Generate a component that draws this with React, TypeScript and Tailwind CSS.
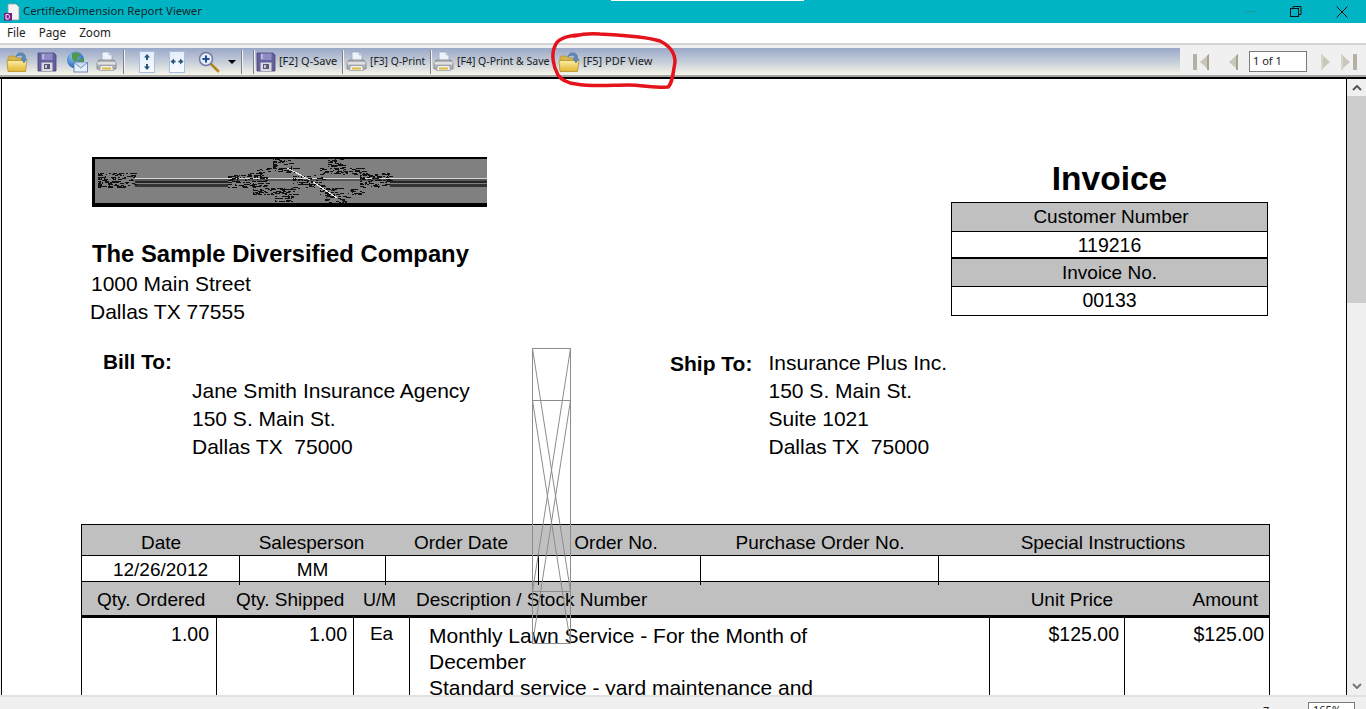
import type { ReactNode } from "react";

// deterministic noise for the broken logo bitmap
function noise(seed: number) {
  let s = seed;
  return () => {
    s = (s * 16807) % 2147483647;
    return s / 2147483647;
  };
}

const LOGO_BLOBS = [
  [6, 16, 43, 31],
  [136, 16, 175, 31],
  [165, 11, 205, 16],
  [181, 1, 201, 11],
  [161, 31, 208, 38],
  [183, 38, 201, 46],
  [201, 18, 231, 31],
  [228, 11, 271, 18],
  [236, 1, 251, 11],
  [228, 31, 271, 38],
  [233, 38, 257, 46],
  [268, 16, 298, 31],
];

function buildLogoDots() {
  const rnd = noise(4711);
  const dots: string[] = [];
  for (const [x0, y0, x1, y1] of LOGO_BLOBS) {
    for (let y = y0; y < y1; y += 1) {
      let x = x0;
      while (x < x1) {
        const w = 1 + Math.floor(rnd() * 5);
        if (rnd() > 0.5) dots.push(`M${x} ${y}h${w}v1h-${w}z`);
        x += w + Math.floor(rnd() * 3);
      }
    }
  }
  return dots.join("");
}

function BrokenLogo() {
  return (
    <svg width="395" height="50" viewBox="0 0 395 50" shapeRendering="crispEdges" className="block">
      <rect width="395" height="50" fill="#000" />
      <rect x="3" y="2" width="392" height="44" fill="#808080" />
      <rect x="43" y="21" width="352" height="1" fill="#d8d8d8" />
      <rect x="43" y="22" width="352" height="2" fill="#555" />
      <rect x="43" y="24" width="93" height="2" fill="#262626" />
      <rect x="43" y="27" width="93" height="3" fill="#333" />
      <rect x="298" y="24" width="97" height="2" fill="#262626" />
      <rect x="298" y="27" width="97" height="3" fill="#333" />
      <path d={buildLogoDots()} fill="#111" />
      <path d="M195 11l23 12M221 25l24 16" stroke="#e8e8e8" strokeWidth="1" fill="none" />
    </svg>
  );
}

function Folder() {
  return (
    <svg width="22" height="22" viewBox="0 0 22 22" className="shrink-0">
      <defs>
        <linearGradient id="folderFace" x1="0" y1="0" x2="0" y2="1">
          <stop offset="0" stopColor="#fff3b0" />
          <stop offset="1" stopColor="#e2b52e" />
        </linearGradient>
      </defs>
      <path d="M2 7l1-2h6l1 2h9v4H2z" fill="#d9b64a" stroke="#a98a2c" strokeWidth="0.6" />
      <path d="M1 9.500h15l5-1-1.500 12H2z" fill="url(#folderFace)" stroke="#b08f2e" strokeWidth="0.8" />
      <path d="M10 6c0-3 3-5 6-4 3 .6 4 3 3.500 6l1.500 0-3 4-3.500-4.500 2 .2c.3-1.500-.5-3-2-3.200-1.800-.3-3.500.3-4.500 1.500z" fill="#5b88b8" stroke="#3c6491" strokeWidth="0.3" />
    </svg>
  );
}

function Floppy() {
  return (
    <svg width="20" height="20" viewBox="0 0 20 20" className="shrink-0">
      <path d="M1 1h16l2 2v16H1z" fill="#64609c" stroke="#45417a" strokeWidth="0.8" />
      <rect x="4.500" y="1.500" width="11" height="6.500" fill="#8f8cc4" />
      <rect x="5" y="2" width="2" height="5" fill="#b9b7de" />
      <rect x="4.500" y="10.500" width="11" height="8.500" fill="#dcdce0" />
      <rect x="7" y="12" width="6" height="5" fill="#5a5878" />
      <rect x="8" y="13" width="2" height="3" fill="#c8c8d4" />
    </svg>
  );
}

function GlobeMail() {
  return (
    <svg width="22" height="22" viewBox="0 0 22 22" className="shrink-0">
      <defs>
        <radialGradient id="globeFace" cx="0.35" cy="0.3" r="0.8">
          <stop offset="0" stopColor="#8cc0f0" />
          <stop offset="1" stopColor="#1c5cb0" />
        </radialGradient>
      </defs>
      <circle cx="9.500" cy="9" r="8.500" fill="url(#globeFace)" />
      <path d="M6 2.500c2-1.200 5-1.500 7-.5l1 3-3 2 1 3-4 .5-2-3zM13 8l4-.5.500 3-2 2-2-1z" fill="#4f9a4a" />
      <rect x="8" y="11.500" width="13.500" height="9.500" fill="#e9eef8" stroke="#4d76b8" strokeWidth="0.8" />
      <path d="M8 11.500l6.750 5.500 6.750-5.500" fill="#cfdcf2" stroke="#4d76b8" strokeWidth="0.8" />
    </svg>
  );
}

function Printer() {
  return (
    <svg width="21" height="21" viewBox="0 0 21 21" className="shrink-0">
      <path d="M6 1h7l3 3v6H6z" fill="#eef2fa" stroke="#9aa6bc" strokeWidth="0.8" />
      <path d="M13 1v3h3" fill="#c3d2ea" stroke="#9aa6bc" strokeWidth="0.5" />
      <path d="M3 9h15l2 3v6H1v-6z" fill="#b0b2b6" stroke="#7d7f85" strokeWidth="0.8" />
      <rect x="1.500" y="11" width="18" height="2.500" fill="#e0e1e4" />
      <path d="M4.500 14.500h12l1 5H3.500z" fill="#eeeff1" stroke="#85878c" strokeWidth="0.6" />
      <rect x="6" y="16.500" width="9" height="2" fill="#e2b93c" />
    </svg>
  );
}

function FitHeight() {
  return (
    <svg width="16" height="22" viewBox="0 0 16 22" className="shrink-0">
      <defs>
        <linearGradient id="pageFace" x1="0" y1="0" x2="0" y2="1">
          <stop offset="0" stopColor="#e4ecfa" />
          <stop offset="1" stopColor="#fbfcff" />
        </linearGradient>
      </defs>
      <rect x="0.500" y="0.500" width="15" height="21" fill="url(#pageFace)" stroke="#a9bfe2" />
      <path d="M8 3l-3 3.500h2V9h2V6.500h2zM8 19l-3-3.500h2V13h2v2.500h2z" fill="#28557f" />
    </svg>
  );
}

function FitWidth() {
  return (
    <svg width="16" height="22" viewBox="0 0 16 22" className="shrink-0">
      <rect x="0.500" y="0.500" width="15" height="21" fill="url(#pageFace)" stroke="#a9bfe2" />
      <path d="M1.500 10.500l3.500-3v2h1.500v2H5v2zM14.500 10.500l-3.500-3v2H9.500v2H11v2z" fill="#28557f" />
    </svg>
  );
}

function ZoomIcon() {
  return (
    <svg width="22" height="22" viewBox="0 0 22 22" className="shrink-0">
      <path d="M13 13l7 7" stroke="#c49a34" strokeWidth="3" strokeLinecap="round" />
      <path d="M13 13l7 7" stroke="#7f6320" strokeWidth="0.8" />
      <circle cx="8" cy="8" r="6.500" fill="#e6ecf8" stroke="#77779f" strokeWidth="1.500" />
      <path d="M8 4.500v7M4.500 8h7" stroke="#1f4f8f" strokeWidth="2" />
    </svg>
  );
}

function Sep({ className = "" }: { className?: string }) {
  return <div className={`h-[24px] w-[2px] shrink-0 border-l border-r border-l-[#7b7f88] border-r-[#f4f4f4] ${className}`} />;
}

function ToolText({ children, className = "" }: { children: ReactNode; className?: string }) {
  return <span className={`whitespace-nowrap text-[#1c1c1c] font-['Noto_Sans',sans-serif] ${className}`}>{children}</span>;
}

function NavArrow({ dir, bar }: { dir: "l" | "r"; bar?: boolean }) {
  const w = bar ? 16 : 10;
  return (
    <svg width={w} height="16" viewBox={`0 0 ${w} 16`} className="shrink-0">
      {dir === "l" ? (
        <>
          {bar && <rect width="4" height="16" fill="#b5b1a4" />}
          <path d={`M${w} 0v16l-9-8z`} fill="#c9c6ba" />
          <path d={`M${w} 0v16h-2V2z`} fill="#a5a296" />
        </>
      ) : (
        <>
          <path d="M0 0v16l9-8z" fill="#c9c6ba" />
          <path d="M0 0v16h2V2z" fill="#d8d5ca" />
          {bar && <rect x="12" width="4" height="16" fill="#b5b1a4" />}
        </>
      )}
    </svg>
  );
}

function TitleBar() {
  return (
    <div className="relative flex h-[23px] shrink-0 items-center bg-[#00b4c4]">
      <div className="absolute left-[611px] top-0 h-px w-[193px] bg-white" />
      <svg width="18" height="18" viewBox="0 0 18 18" className="ml-[3px]">
        <path d="M5 1h8l3 3v13H5z" fill="#f4f4f4" stroke="#9b9b9b" strokeWidth="0.8" />
        <rect x="1" y="10" width="8" height="7.500" fill="#7c1a85" />
        <path d="M3 11.500h2c2 0 2 4.500 0 4.500H3z" fill="none" stroke="#fff" strokeWidth="1" />
      </svg>
      <span className="ml-[2px] text-[11.3px] text-[#10292c] font-['Noto_Sans',sans-serif]">CertiflexDimension Report Viewer</span>
      <div className="ml-auto flex items-center">
        <div className="mr-[35px] h-px w-[10px] bg-[#2a8f99]" />
        <svg width="12" height="12" viewBox="0 0 12 12" className="mr-[34px]" fill="none" stroke="#111">
          <rect x="0.500" y="2.500" width="8" height="8" />
          <path d="M3 2.500V.500h8v8H8.500" />
        </svg>
        <svg width="12" height="12" viewBox="0 0 12 12" className="mr-[18px]" stroke="#111" strokeWidth="1">
          <path d="M.5.500l11 11M11.500.500l-11 11" />
        </svg>
      </div>
    </div>
  );
}

function MenuBar() {
  return (
    <div className="flex h-[19px] shrink-0 items-center gap-[13px] bg-white pl-[7px] text-[11.700px] text-[#222] font-['Noto_Sans',sans-serif]">
      <span>File</span>
      <span>Page</span>
      <span>Zoom</span>
    </div>
  );
}

function ToolBar() {
  return (
    <div className="flex h-[35px] shrink-0 flex-col bg-[#f0f0f0]">
      <div className="h-[3px] border-b-2 border-[#d4d4d4] bg-white" />
      <div className="mt-[3px] flex h-[27px]">
        <div className="flex w-[1180px] items-center bg-gradient-to-b from-[#9aa8c8] via-[#c4ccd8] to-[#f7f5e8] pl-[6px]">
          <Folder />
          <div className="ml-[9px]"><Floppy /></div>
          <div className="ml-[9px]"><GlobeMail /></div>
          <div className="ml-[8px]"><Printer /></div>
          <Sep className="ml-[6px]" />
          <div className="ml-[14px]"><FitHeight /></div>
          <div className="ml-[14px]"><FitWidth /></div>
          <div className="ml-[13px]"><ZoomIcon /></div>
          <div className="ml-[8px] h-0 w-0 border-x-[4px] border-t-[4px] border-x-transparent border-t-black" />
          <Sep className="ml-[5px]" />
          <Sep className="ml-[10px]" />
          <div className="ml-[1px]"><Floppy /></div>
          <ToolText className="ml-[3px] w-[63px] text-[11px]">[F2] Q-Save</ToolText>
          <Sep />
          <div className="ml-[2px]"><Printer /></div>
          <ToolText className="ml-[3px] w-[60px] text-[10.300px]">[F3] Q-Print</ToolText>
          <Sep />
          <div className="ml-[1px]"><Printer /></div>
          <ToolText className="ml-[3px] w-[101px] text-[10.500px]">[F4] Q-Print &amp; Save</ToolText>
          <Folder />
          <ToolText className="ml-[3px] text-[11px]">[F5] PDF View</ToolText>
        </div>
        <div className="flex flex-1 items-center">
          <div className="ml-[13px]"><NavArrow dir="l" bar /></div>
          <div className="ml-[19px]"><NavArrow dir="l" /></div>
          <div className="ml-[11px] flex h-[21px] w-[58px] items-center border border-[#7a7a7a] bg-white pl-[3px] text-[11px] text-[#222] font-['Noto_Sans',sans-serif]">1 of 1</div>
          <div className="ml-[14px]"><NavArrow dir="r" /></div>
          <div className="ml-[10px]"><NavArrow dir="r" bar /></div>
        </div>
      </div>
      <div className="h-[2px] bg-[#a6a6a6]" />
    </div>
  );
}

function ScrollBar() {
  return (
    <div className="flex w-[20px] shrink-0 flex-col items-center bg-[#f0f0f0] border-l border-black">
      <svg width="10" height="6" viewBox="0 0 10 6" fill="none" stroke="#555" strokeWidth="2" className="mt-[6px] shrink-0">
        <path d="M1 5l4-4 4 4" />
      </svg>
      <div className="mt-[5px] h-[207px] w-full shrink-0 bg-[#cdcdcd]" />
      <svg width="10" height="6" viewBox="0 0 10 6" fill="none" stroke="#777" strokeWidth="2" className="mt-auto mb-[6px] shrink-0">
        <path d="M1 1l4 4 4-4" />
      </svg>
    </div>
  );
}

function GrayCell({ children, className = "" }: { children: ReactNode; className?: string }) {
  return <div className={`flex items-center justify-center bg-[#c0c0c0] ${className}`}>{children}</div>;
}

function InvoiceBox() {
  return (
    <div className="w-[317px] border border-black text-center text-[19px] text-black">
      <GrayCell className="h-[29px] border-b border-black pl-[3px]">Customer Number</GrayCell>
      <div className="flex h-[27px] items-center justify-center border-b-2 border-black pt-[2px] text-[19.500px]">119216</div>
      <GrayCell className="h-[28px] border-b border-black pt-[2px]">Invoice No.</GrayCell>
      <div className="flex h-[28px] items-center justify-center text-[19.500px]">00133</div>
    </div>
  );
}

function LinesTable() {
  return (
    <div className="ml-[79px] mt-[24px] w-[1189px] border-x border-t border-black text-[19px] text-black">
      <div className="grid h-[31px] grid-cols-[158px_146px_153px_162px_238px_1fr] items-center border-b border-black bg-[#c0c0c0] pt-[4px] text-center">
        <span>Date</span>
        <span className="pr-[3px]">Salesperson</span>
        <span className="pr-[3px]">Order Date</span>
        <span className="pr-[8px]">Order No.</span>
        <span>Purchase Order No.</span>
        <span className="pr-[2px]">Special Instructions</span>
      </div>
      <div className="grid h-[26px] grid-cols-[158px_146px_153px_162px_238px_1fr] items-center border-b border-black text-center">
        <span className="flex h-full items-center justify-center border-r border-black">12/26/2012</span>
        <span className="flex h-full items-center justify-center border-r border-black">MM</span>
        <span className="h-full border-r border-black" />
        <span className="h-full border-r border-black" />
        <span className="h-full border-r border-black" />
        <span />
      </div>
      <div className="grid h-[36px] grid-cols-[135px_137px_56px_580px_135px_1fr] items-center border-b-[3px] border-black bg-[#c0c0c0] pt-[4px]">
        <span className="pl-[15px]">Qty. Ordered</span>
        <span className="pl-[19px]">Qty. Shipped</span>
        <span className="pl-[9px] text-[18px]">U/M</span>
        <span className="pl-[6px]">Description / Stock Number</span>
        <span className="pr-[12px] text-right">Unit Price</span>
        <span className="pr-[11px] text-right">Amount</span>
      </div>
      <div className="grid h-[90px] grid-cols-[135px_137px_56px_580px_135px_1fr]">
        <div className="border-r border-black pr-[7px] pt-[2px] text-right text-[19.500px]">1.00</div>
        <div className="border-r border-black pr-[6px] pt-[2px] text-right text-[19.500px]">1.00</div>
        <div className="border-r border-black pt-[2px] text-center">Ea</div>
        <div className="border-r border-black pl-[19px] pt-[5px] text-[21px] leading-[26px]">
          Monthly Lawn Service - For the Month of
          <br />
          December
          <br />
          Standard service - yard maintenance and
        </div>
        <div className="border-r border-black pr-[5px] pt-[2px] text-right text-[19.500px]">$125.00</div>
        <div className="pr-[5px] pt-[2px] text-right text-[19.500px]">$125.00</div>
      </div>
    </div>
  );
}

function ReportPage() {
  return (
    <div className="relative flex-1 overflow-hidden bg-white font-['Liberation_Sans',Arial,sans-serif]">
      <div className="flex items-start">
        <div className="ml-[90px] mt-[78px]">
          <BrokenLogo />
          <div className="mt-[32px] text-[23.800px] font-bold leading-[30px] text-black">The Sample Diversified Company</div>
          <div className="-ml-px text-[21px] leading-[29px] text-black">1000 Main Street</div>
          <div className="-ml-[2px] text-[21px] leading-[28px] text-black">Dallas TX 77555</div>
        </div>
        <div className="ml-[464px] mt-[78px] w-[317px]">
          <div className="mb-px text-center text-[33.500px] font-bold leading-[44px]">Invoice</div>
          <InvoiceBox />
        </div>
      </div>
      <div className="mt-[22px] flex h-[152px] items-start text-[21px] leading-[28px] text-black">
        <div className="ml-[101px] w-[89px] font-bold text-[20.800px]">Bill To:</div>
        <div className="mt-[29px] w-[478px]">
          Jane Smith Insurance Agency
          <br />
          150 S. Main St.
          <br />
          Dallas TX&nbsp; 75000
        </div>
        <div className="w-[98.500px] pt-[2px] font-bold">Ship To:</div>
        <div className="pt-px">
          Insurance Plus Inc.
          <br />
          150 S. Main St.
          <br />
          Suite 1021
          <br />
          Dallas TX&nbsp; 75000
        </div>
      </div>
      <LinesTable />
      {/* empty image placeholders drawn by the viewer over the report */}
      <svg width="40" height="297" viewBox="0 0 40 297" fill="none" stroke="#8c8c8c" strokeWidth="1" className="absolute left-[530px] top-[269px]">
        <rect x="0.500" y="0.500" width="38" height="243" />
        <rect x="0.500" y="52.500" width="38" height="243" />
        <path d="M.5.500l38 243M38.500.500l-38 243M.5 52.500l38 243M38.500 52.500l-38 243" />
      </svg>
    </div>
  );
}

function StatusBar() {
  return (
    <div className="relative h-[14px] shrink-0 overflow-hidden border-t-2 border-[#e2e2e2] bg-[#f0f0f0] font-['Noto_Sans',sans-serif] text-[11px] text-[#222]">
      <span className="absolute left-[1263px] top-[6px]">Zoom:</span>
      <div className="absolute left-[1308px] top-[5px] h-[20px] w-[47px] border border-[#7a7a7a] bg-white pl-[4px] leading-[14px]">165%</div>
    </div>
  );
}

export default function App() {
  return (
    <div className="relative flex h-[709px] w-[1366px] flex-col overflow-hidden bg-[#f0f0f0]">
      <TitleBar />
      <MenuBar />
      <ToolBar />
      <div className="flex min-h-0 flex-1 border-t-2 border-black bg-white">
        <div className="w-[2px] shrink-0 bg-[#f0f0f0] border-r border-black" />
        <ReportPage />
        <ScrollBar />
      </div>
      <StatusBar />
      {/* red marker ring someone drew on the screenshot */}
      <svg width="1366" height="709" className="pointer-events-none absolute left-0 top-0" fill="none">
        <path
          d="M578 35C566 36 557 40 555 46C551 54 553 66 558 75C562 81 568 83 576 84C592 87 612 85 628 85C642 85 656 88 668 87C672 84 673 74 675 62C675 52 668 45 660 41C645 36 620 35 600 34C590 33 582 34 574 36"
          stroke="#e5141c"
          strokeWidth="3.500"
          strokeLinecap="round"
        />
      </svg>
    </div>
  );
}
